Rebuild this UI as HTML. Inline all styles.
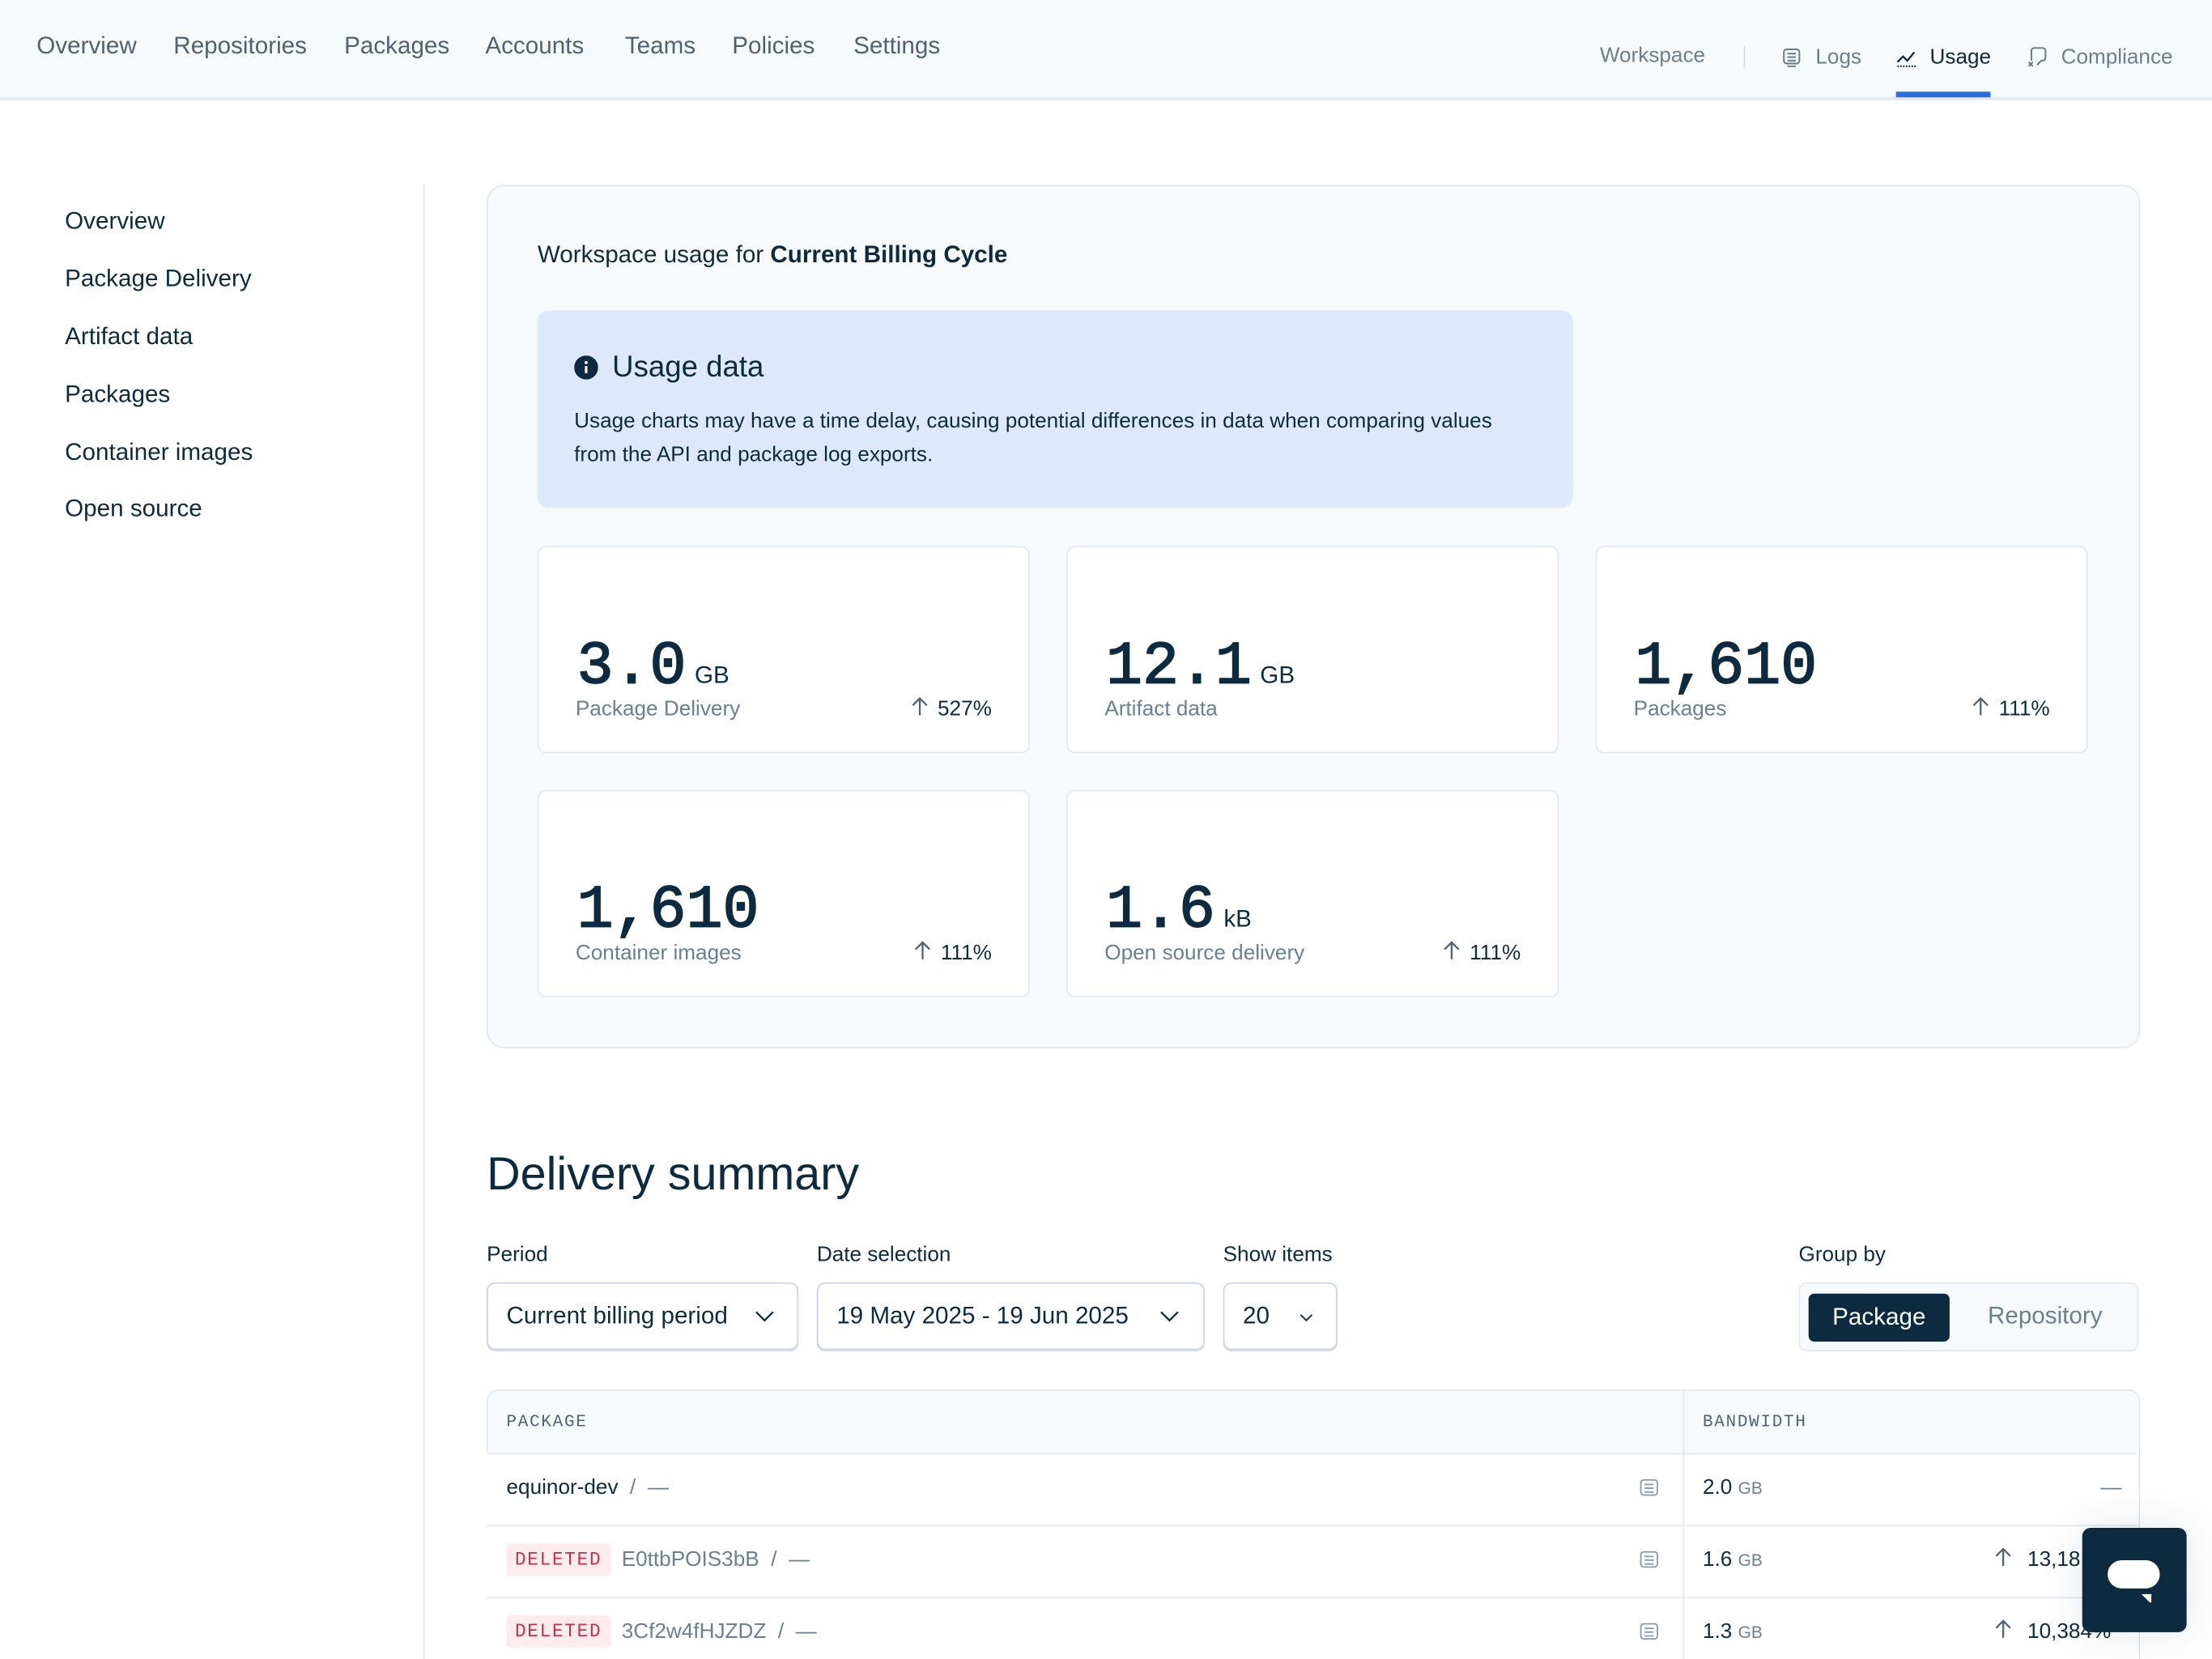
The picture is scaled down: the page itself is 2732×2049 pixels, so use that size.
<!DOCTYPE html>
<html><head><meta charset="utf-8">
<style>
html,body{margin:0;padding:0;background:#fff;overflow:hidden;width:2732px;height:2048px}
#w{position:absolute;left:0;top:0;width:1568px;height:1176px;transform:scale(1.742347);transform-origin:0 0;font-family:"Liberation Sans",sans-serif;color:#0d2b40;overflow:hidden}
.a{position:absolute;white-space:nowrap}
.nav{font-size:17px;color:#4e6275;top:23px}
.side{font-size:17px;left:46px}
.card{position:absolute;background:#fff;border:1px solid #e1e8f0;border-radius:6px;width:347px;height:145px}
.big{position:absolute;left:27px;top:60px;font-family:"Liberation Mono",monospace;font-size:43px;font-weight:normal;-webkit-text-stroke:1px #0d2b40;letter-spacing:0px;color:#0d2b40}
.big small{font-family:"Liberation Sans",sans-serif;font-size:17px;font-weight:normal;-webkit-text-stroke:0;letter-spacing:0;margin-left:6px}
.lbl{position:absolute;left:26px;top:106px;font-size:15px;color:#6b7f92}
.pct{position:absolute;right:26px;top:106px;font-size:15px;color:#0d2b40}
.up{display:inline-block;vertical-align:-1px;margin-right:7px}
.flab{font-size:15px;top:881px}
.sel{position:absolute;top:909px;height:48px;border:1px solid #c9d5e0;border-radius:6px;background:#fff;font-size:17px;box-sizing:border-box;box-shadow:0 1px 0 #d5dee8}
.sel span{position:absolute;left:13px;top:13px;white-space:nowrap}
.sel svg{position:absolute;top:19px}
.row{position:absolute;left:345px;width:1170px;height:50px;border-top:1px solid #e1e8f0;background:#fff}
.row .t{position:absolute;top:15px;font-size:15px;white-space:nowrap}
.del{display:inline-block;background:#fdebee;color:#c0334d;font-family:"Liberation Mono",monospace;font-size:13px;letter-spacing:1px;padding:4px 6px;border-radius:3px;margin-right:8px;vertical-align:1px}
.gray{color:#6b7f92}
.gb{color:#6b7f92;font-size:12px}
</style></head><body><div id="w">
<div class="a" style="left:0;top:0;width:1568px;height:69px;background:#f7fafd;border-bottom:2px solid #e1e8f0"></div>
<div class="a nav" style="left:26px">Overview</div>
<div class="a nav" style="left:123px">Repositories</div>
<div class="a nav" style="left:244px">Packages</div>
<div class="a nav" style="left:344px">Accounts</div>
<div class="a nav" style="left:443px">Teams</div>
<div class="a nav" style="left:519px">Policies</div>
<div class="a nav" style="left:605px">Settings</div>
<div class="a" style="left:1134px;top:31px;font-size:15px;color:#6b7f92">Workspace</div>
<div class="a" style="left:1236px;top:32px;width:1px;height:16px;background:#d5dee8"></div>
<svg class="a" style="left:1263px;top:34px" width="14" height="14" viewBox="0 0 14 14" fill="none" stroke="#6b7f92" stroke-width="1.2"><rect x="1.5" y="1" width="11" height="10" rx="2"/><path d="M4 4h6M4 6.5h6M4 9h6M4 13h6"/></svg>
<div class="a" style="left:1287px;top:32px;font-size:15px;color:#6b7f92">Logs</div>
<svg class="a" style="left:1344px;top:34px" width="15" height="14" viewBox="0 0 15 14" fill="none" stroke="#0d2b40" stroke-width="1.3"><path d="M1 10l4-4 3 3 5-6"/><path d="M1 13h13" stroke-dasharray="1 1"/></svg>
<div class="a" style="left:1368px;top:32px;font-size:15px;color:#0d2b40">Usage</div>
<div class="a" style="left:1344px;top:65px;width:67px;height:4px;background:#2a6ee0"></div>
<svg class="a" style="left:1437px;top:33px" width="15" height="16" viewBox="0 0 15 16" fill="none" stroke="#6b7f92" stroke-width="1.2"><path d="M3 10V3a2 2 0 0 1 2-2h6a2 2 0 0 1 2 2v5a2 2 0 0 1-2 2h-1l-3 3"/><path d="M1 11l3 3M4 11l-3 3"/></svg>
<div class="a" style="left:1461px;top:32px;font-size:15px;color:#6b7f92">Compliance</div>
<div class="a side" style="top:147px">Overview</div>
<div class="a side" style="top:188px">Package Delivery</div>
<div class="a side" style="top:229px">Artifact data</div>
<div class="a side" style="top:270px">Packages</div>
<div class="a side" style="top:311px">Container images</div>
<div class="a side" style="top:351px">Open source</div>
<div class="a" style="left:300px;top:131px;width:1px;height:1045px;background:#e1e8f0"></div>
<div class="a" style="left:345px;top:131px;width:1170px;height:610px;background:#f7fafd;border:1px solid #e1e8f0;border-radius:12px"></div>
<div class="a" style="left:381px;top:171px;font-size:17px">Workspace usage for <b>Current Billing Cycle</b></div>
<div class="a" style="left:381px;top:220px;width:734px;height:140px;background:#dde9fb;border-radius:8px"></div>
<svg class="a" style="left:407px;top:252px" width="17" height="17" viewBox="0 0 17 17"><circle cx="8.5" cy="8.5" r="8.5" fill="#0d2b40"/><rect x="7.6" y="7.5" width="1.8" height="5" fill="#fff"/><circle cx="8.5" cy="5" r="1.1" fill="#fff"/></svg>
<div class="a" style="left:434px;top:249px;font-size:21px">Usage data</div>
<div class="a" style="left:407px;top:287px;font-size:15px;line-height:24px">Usage charts may have a time delay, causing potential differences in data when comparing values<br>from the API and package log exports.</div>
<div class="card" style="left:381px;top:387px"><div class="big">3.0<small>GB</small></div><div class="lbl">Package Delivery</div><div class="pct"><svg class="up" width="12" height="14" viewBox="0 0 12 14" fill="none" stroke="#4e6275" stroke-width="1.3"><path d="M6 13V1M1 6l5-5 5 5"/></svg>527%</div></div>
<div class="card" style="left:756px;top:387px"><div class="big">12.1<small>GB</small></div><div class="lbl">Artifact data</div></div>
<div class="card" style="left:1131px;top:387px"><div class="big">1,610</div><div class="lbl">Packages</div><div class="pct"><svg class="up" width="12" height="14" viewBox="0 0 12 14" fill="none" stroke="#4e6275" stroke-width="1.3"><path d="M6 13V1M1 6l5-5 5 5"/></svg>111%</div></div>
<div class="card" style="left:381px;top:560px"><div class="big">1,610</div><div class="lbl">Container images</div><div class="pct"><svg class="up" width="12" height="14" viewBox="0 0 12 14" fill="none" stroke="#4e6275" stroke-width="1.3"><path d="M6 13V1M1 6l5-5 5 5"/></svg>111%</div></div>
<div class="card" style="left:756px;top:560px"><div class="big">1.6<small>kB</small></div><div class="lbl">Open source delivery</div><div class="pct"><svg class="up" width="12" height="14" viewBox="0 0 12 14" fill="none" stroke="#4e6275" stroke-width="1.3"><path d="M6 13V1M1 6l5-5 5 5"/></svg>111%</div></div>
<div class="a" style="left:345px;top:813px;font-size:33px">Delivery summary</div>
<div class="a flab" style="left:345px">Period</div>
<div class="a flab" style="left:579px">Date selection</div>
<div class="a flab" style="left:867px">Show items</div>
<div class="a flab" style="left:1275px">Group by</div>
<div class="sel" style="left:345px;width:221px"><span>Current billing period</span><svg style="left:189px" width="14" height="9" viewBox="0 0 14 9" fill="none" stroke="#0d2b40" stroke-width="1.3"><path d="M1 1l6 6 6-6"/></svg></div>
<div class="sel" style="left:579px;width:275px"><span>19 May 2025 - 19 Jun 2025</span><svg style="left:242px" width="14" height="9" viewBox="0 0 14 9" fill="none" stroke="#0d2b40" stroke-width="1.3"><path d="M1 1l6 6 6-6"/></svg></div>
<div class="sel" style="left:867px;width:81px"><span>20</span><svg style="left:53px;top:21px" width="10" height="6" viewBox="0 0 10 6" fill="none" stroke="#0d2b40" stroke-width="1.1"><path d="M1 1l4 4 4-4"/></svg></div>
<div class="a" style="left:1275px;top:909px;width:241px;height:49px;background:#f7fafd;border:1px solid #e1e8f0;border-radius:6px;box-sizing:border-box"></div>
<div class="a" style="left:1282px;top:917px;width:100px;height:34px;background:#0d2b40;border-radius:4px;color:#fff;font-size:17px;text-align:center;line-height:34px">Package</div>
<div class="a" style="left:1409px;top:923px;font-size:17px;color:#6b7f92">Repository</div>
<div class="a" style="left:345px;top:985px;width:1170px;height:200px;border:1px solid #e1e8f0;border-radius:8px 8px 0 0;overflow:hidden;background:#fff"></div>
<div class="a" style="left:346px;top:986px;width:1169px;height:44px;background:#f7fafd;border-radius:8px 8px 0 0"></div>
<div class="a" style="left:359px;top:1001px;font-family:'Liberation Mono',monospace;font-size:12px;letter-spacing:1px;color:#4e6275">PACKAGE</div>
<div class="a" style="left:1207px;top:1001px;font-family:'Liberation Mono',monospace;font-size:12px;letter-spacing:1px;color:#4e6275">BANDWIDTH</div>
<div class="row" style="top:1030px"><div class="t" style="left:14px">equinor-dev <span class="gray">&nbsp;/&nbsp; —</span></div><div class="t" style="left:862px">2.0 <span class="gb">GB</span></div><div class="t gray" style="left:1144px">—</div></div>
<div class="row" style="top:1081px"><div class="t" style="left:14px;top:12px"><span class="del">DELETED</span><span class="gray">E0ttbPOIS3bB &nbsp;/&nbsp; —</span></div><div class="t" style="left:862px">1.6 <span class="gb">GB</span></div><div class="t" style="left:1069px"><svg class="up" width="12" height="14" viewBox="0 0 12 14" fill="none" stroke="#4e6275" stroke-width="1.3"><path d="M6 13V1M1 6l5-5 5 5"/></svg>&nbsp;13,18</div></div>
<div class="row" style="top:1132px"><div class="t" style="left:14px;top:12px"><span class="del">DELETED</span><span class="gray">3Cf2w4fHJZDZ &nbsp;/&nbsp; —</span></div><div class="t" style="left:862px">1.3 <span class="gb">GB</span></div><div class="t" style="left:1069px"><svg class="up" width="12" height="14" viewBox="0 0 12 14" fill="none" stroke="#4e6275" stroke-width="1.3"><path d="M6 13V1M1 6l5-5 5 5"/></svg>&nbsp;10,384%</div></div>
<div class="a" style="left:1193px;top:986px;width:1px;height:190px;background:#e1e8f0"></div>
<svg class="a" style="left:1161px;top:1048px" width="16" height="15" viewBox="0 0 14 14" fill="none" stroke="#8d9cab" stroke-width="1"><rect x="1.5" y="1" width="11" height="10" rx="2"/><path d="M4 4h6M4 6.5h6M4 9h6"/></svg>
<svg class="a" style="left:1161px;top:1099px" width="16" height="15" viewBox="0 0 14 14" fill="none" stroke="#8d9cab" stroke-width="1"><rect x="1.5" y="1" width="11" height="10" rx="2"/><path d="M4 4h6M4 6.5h6M4 9h6"/></svg>
<svg class="a" style="left:1161px;top:1150px" width="16" height="15" viewBox="0 0 14 14" fill="none" stroke="#8d9cab" stroke-width="1"><rect x="1.5" y="1" width="11" height="10" rx="2"/><path d="M4 4h6M4 6.5h6M4 9h6"/></svg>
<div class="a" style="left:1476px;top:1083px;width:74px;height:74px;background:#0d2b40;border-radius:6px;box-shadow:0 0 30px rgba(13,43,64,.12)"></div>
<svg class="a" style="left:1494px;top:1106px" width="38" height="30" viewBox="0 0 38 30"><rect x="0" y="0" width="37" height="20" rx="10" fill="#fff"/><path d="M24 24h7v7z" fill="#fff"/></svg>
</div></body></html>
